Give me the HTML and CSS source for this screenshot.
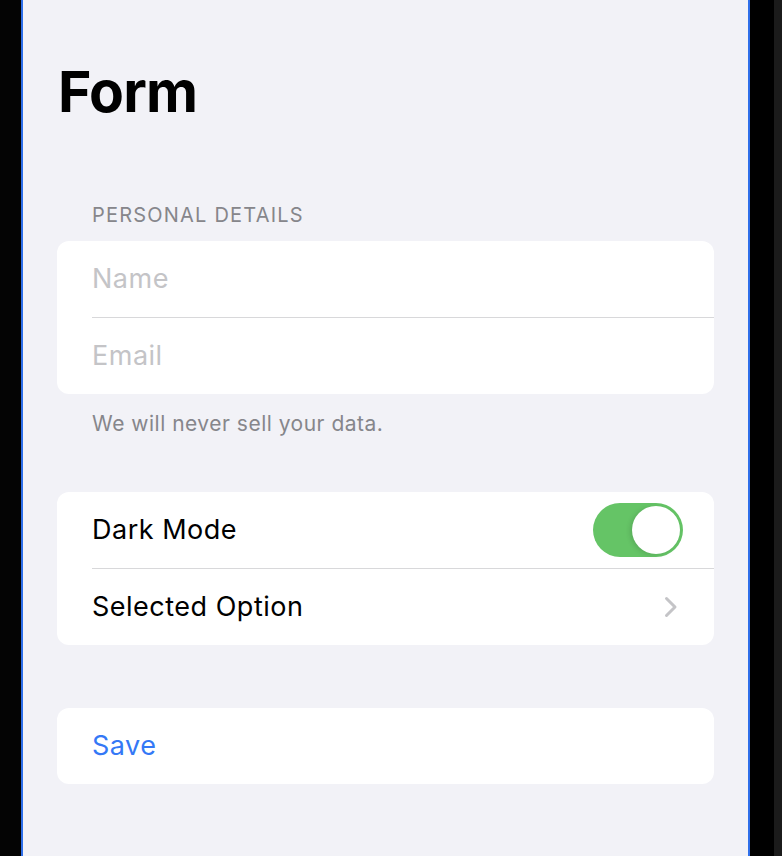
FILE: index.html
```html
<!DOCTYPE html>
<html lang="en">
<head>
<meta charset="utf-8">
<title>Form</title>
<link rel="stylesheet" href="styles.css">
</head>
<body>
<div class="frame">
  <div class="gutter-left"></div>
  <main class="screen">
    <h1 class="title">Form</h1>

    <section class="group">
      <div class="group-header">PERSONAL DETAILS</div>
      <div class="card">
        <div class="row"><span class="placeholder">Name</span></div>
        <div class="divider"></div>
        <div class="row"><span class="placeholder">Email</span></div>
      </div>
      <div class="group-footer">We will never sell your data.</div>
    </section>

    <section class="group group-settings">
      <div class="card">
        <div class="row row-toggle">
          <span class="label">Dark Mode</span>
          <span class="toggle"><span class="knob"></span></span>
        </div>
        <div class="divider"></div>
        <div class="row row-nav">
          <span class="label">Selected Option</span>
          <svg class="chevron" width="14" height="22" viewBox="0 0 14 22" aria-hidden="true">
            <polyline points="2.5,2.5 11,11 2.5,19.5" fill="none" stroke="#c4c4c7" stroke-width="3" stroke-linecap="round" stroke-linejoin="round"/>
          </svg>
        </div>
      </div>
    </section>

    <section class="group group-action">
      <div class="card">
        <div class="row"><span class="action">Save</span></div>
      </div>
    </section>
  </main>
  <div class="gutter-right"><div class="scroll-edge"></div></div>
</div>
</body>
</html>
```

FILE: styles.css
```css
html, body {
  margin: 0;
  padding: 0;
  background: #000;
}

body {
  font-family: "Inter", "Liberation Sans", sans-serif;
  color: #000;
}

.frame {
  display: flex;
  height: 856px;
  width: 782px;
  overflow: hidden;
}

.gutter-left {
  width: 21px;
  flex: none;
  background: #040404;
}

.screen {
  width: 729px;
  flex: none;
  box-sizing: border-box;
  background: #f2f2f7;
  border-left: 2px solid #2f6fe9;
  border-right: 2px solid #2f6fe9;
  padding: 58px 34px 0;
}

.gutter-right {
  flex: 1;
  display: flex;
  justify-content: flex-end;
  background: #000;
}

.scroll-edge {
  width: 8px;
  background: #1b1b1b;
}

.title {
  margin: 0;
  font-size: 57px;
  line-height: 68px;
  font-weight: 700;
  letter-spacing: -0.8px;
  padding-left: 1px;
}

.group {
  display: flex;
  flex-direction: column;
}

.group-header {
  margin: 77px 0 14px 35px;
  font-size: 20px;
  line-height: 24px;
  color: #86868b;
  letter-spacing: 1.2px;
}

.group-footer {
  margin: 18px 0 0 35px;
  font-size: 21px;
  line-height: 24px;
  color: #86868b;
  letter-spacing: 0.5px;
}

.group-settings {
  margin-top: 56px;
}

.group-action {
  margin-top: 63px;
}

.card {
  background: #fff;
  border-radius: 12px;
  overflow: hidden;
}

.row {
  height: 76px;
  display: flex;
  align-items: center;
  padding: 0 31px 0 35px;
  font-size: 27px;
  line-height: 32px;
  letter-spacing: 0.5px;
}

.divider {
  height: 1px;
  margin-left: 35px;
  background: #d8d8da;
}

.placeholder {
  color: #c4c4c7;
}

.label {
  flex: 1;
  color: #000;
}

.row-nav {
  padding-right: 36px;
}

.toggle {
  width: 90px;
  height: 54px;
  border-radius: 27px;
  background: #65c466;
  display: flex;
  align-items: center;
  justify-content: flex-end;
  padding: 0 3px;
  box-sizing: border-box;
}

.knob {
  width: 48px;
  height: 48px;
  border-radius: 50%;
  background: #fff;
  box-shadow: -2px 1px 5px rgba(0, 0, 0, 0.12);
}

.chevron {
  display: block;
  flex: none;
}

.action {
  color: #3478f6;
}
```
